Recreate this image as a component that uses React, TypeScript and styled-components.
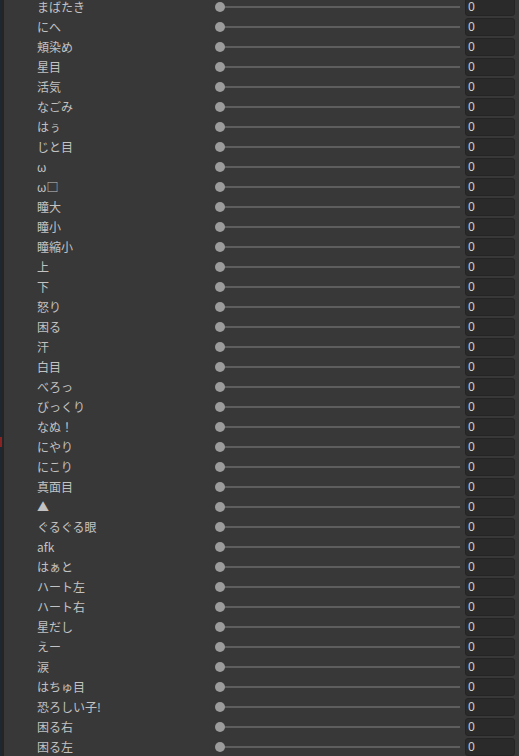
import React from "react";
import styled, { createGlobalStyle } from "styled-components";

const Global = createGlobalStyle`
  html, body { margin: 0; padding: 0; background: #383838; overflow: hidden; }
  body { font-family: "Noto Sans CJK JP", "Noto Sans", sans-serif; }
`;

const Frame = styled.div`
  display: flex;
  width: 519px;
  height: 756px;
  overflow: hidden;
  background: #383838;
`;

const EdgeBar = styled.div`
  position: relative;
  width: 2px;
  background: #1d2731;
  flex: none;
`;

const EdgeMark = styled.div`
  position: absolute;
  left: 0;
  top: 437px;
  width: 2px;
  height: 10px;
  background: #8a2323;
`;

const EdgeShadow = styled.div`
  width: 2px;
  background: #242424;
  flex: none;
`;

const List = styled.div`
  flex: 1;
  display: flex;
  flex-direction: column;
  margin-top: -3px;
  padding-left: 33px;
`;

const Row = styled.div`
  display: flex;
  align-items: center;
  height: 20px;
  flex: none;
`;

const Label = styled.div`
  width: 178px;
  flex: none;
  font-size: 12px;
  color: #c2c2c2;
  white-space: nowrap;
  line-height: 20px;
`;

const Slider = styled.div`
  position: relative;
  flex: 1;
  height: 20px;
`;

const Track = styled.div`
  position: absolute;
  left: 5px;
  right: 2px;
  top: 9px;
  height: 2px;
  background: #5e5e5e;
`;

const Thumb = styled.div`
  position: absolute;
  left: 0;
  top: 5px;
  width: 10px;
  height: 10px;
  border-radius: 50%;
  background: #9c9c9c;
`;

const ValueBox = styled.div`
  width: 50px;
  height: 18px;
  margin: 0 4px 0 3px;
  flex: none;
  box-sizing: border-box;
  border: 1px solid #242424;
  border-radius: 3px;
  background: #2a2a2a;
  color: #cecece;
  font-family: "Noto Sans", sans-serif;
  font-size: 12px;
  line-height: 16px;
  padding-left: 2px;
`;

const names = [
  "まばたき", "にへ", "頬染め", "星目", "活気", "なごみ", "はぅ", "じと目", "ω", "ω□",
  "瞳大", "瞳小", "瞳縮小", "上", "下", "怒り", "困る", "汗", "白目", "べろっ",
  "びっくり", "なぬ！", "にやり", "にこり", "真面目", "▲", "ぐるぐる眼", "afk", "はぁと", "ハート左",
  "ハート右", "星だし", "えー", "涙", "はちゅ目", "恐ろしい子!", "困る右", "困る左",
];

export default function App() {
  return (
    <>
      <Global />
      <Frame>
        <EdgeBar>
          <EdgeMark />
        </EdgeBar>
        <EdgeShadow />
        <List>
          {names.map((n) => (
            <Row key={n}>
              <Label>{n}</Label>
              <Slider>
                <Track />
                <Thumb />
              </Slider>
              <ValueBox>0</ValueBox>
            </Row>
          ))}
        </List>
      </Frame>
    </>
  );
}
